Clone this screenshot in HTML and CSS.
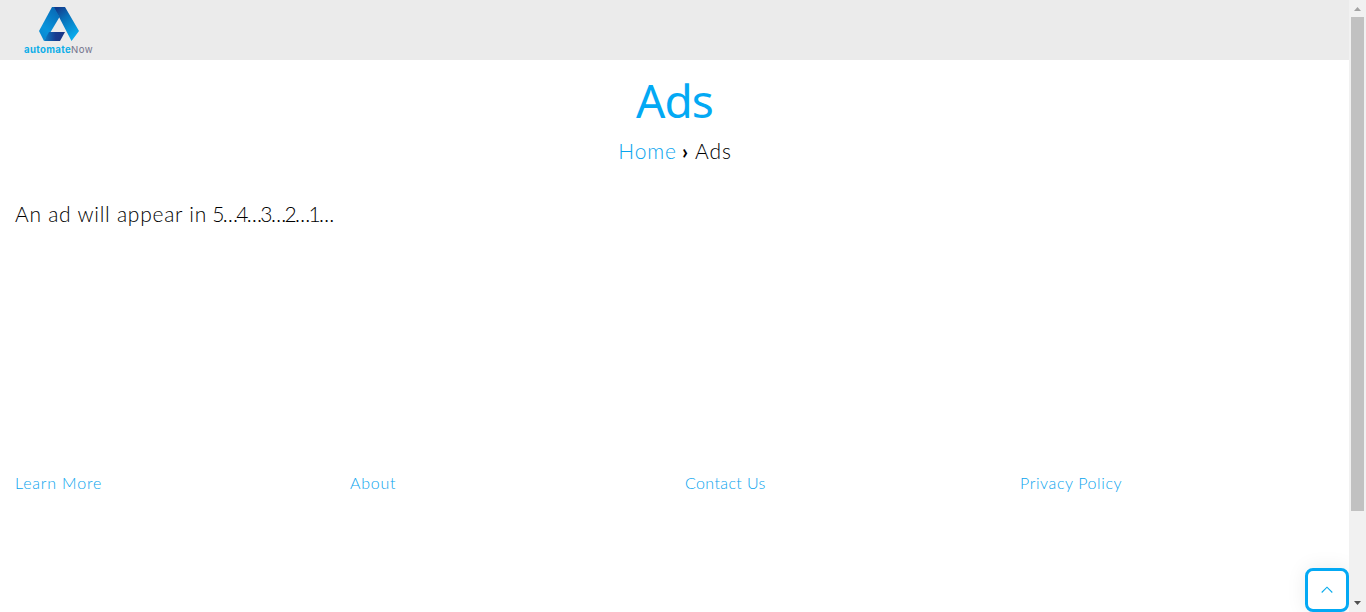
FILE: index.html
```html
<!DOCTYPE html>
<html lang="en">
<head>
<meta charset="utf-8">
<title>Ads</title>
<link rel="stylesheet" href="styles.css">
</head>
<body>
<div class="page">
  <header class="site-header">
    <a class="logo" href="#" aria-label="automateNow">
      <svg width="72" height="50" viewBox="0 0 72 50">
        <defs>
          <linearGradient id="left" x1="0.8" y1="0" x2="0.3" y2="1">
            <stop offset="0" stop-color="#0868b4"/><stop offset="0.7" stop-color="#0894dc"/><stop offset="1" stop-color="#0888d0"/>
          </linearGradient>
          <linearGradient id="right" x1="0.2" y1="0" x2="0.8" y2="1">
            <stop offset="0" stop-color="#123a8c"/><stop offset="0.35" stop-color="#0870b8"/><stop offset="1" stop-color="#08b4f4"/>
          </linearGradient>
          <linearGradient id="base" x1="0" y1="0" x2="1" y2="0">
            <stop offset="0" stop-color="#0880c8"/><stop offset="0.55" stop-color="#183c90"/><stop offset="1" stop-color="#183484"/>
          </linearGradient>
        </defs>
        <path fill="url(#right)" d="M30 2h12l14 24-7.5 10L36 12Z"/>
        <path fill="url(#left)" d="M29 2h2l5.5 10L27 28l-6 8L16 26Z"/>
        <path fill="url(#base)" d="M26 27h16l-5 9H21Z"/>
      </svg>
      <span class="logo-name"><b>automate</b>Now</span>
    </a>
  </header>
  <main class="content">
    <h1 class="title">Ads</h1>
    <nav class="crumbs"><a class="home" href="#">Home</a><span class="sep">›</span><span class="current">Ads</span></nav>
    <p class="notice"><span class="words">An ad will appear in</span> <span class="count">5…4…3…2…1…</span></p>
  </main>
  <footer class="links">
    <a class="learn" href="#">Learn More</a><a class="about" href="#">About</a><a class="contact" href="#">Contact Us</a><a class="privacy" href="#">Privacy Policy</a>
  </footer>
  <a class="to-top" href="#" aria-label="Back to top">
    <svg width="14" height="10" viewBox="0 0 14 10"><path d="M1.7 7.5 7 2.2l5.3 5.3" fill="none" stroke="#09aced" stroke-width="1.1"/></svg>
  </a>
</div>
<div class="scrollbar">
  <svg width="17" height="17" viewBox="0 0 17 17"><path fill="#a3a3a3" d="M5 11h7L8.5 7Z"/></svg>
  <div class="thumb"></div>
  <svg class="down" width="17" height="17" viewBox="0 0 17 17"><path fill="#505050" d="M5 6h7L8.5 10Z"/></svg>
</div>
</body>
</html>
```
FILE: styles.css
```css
* { box-sizing: border-box; }
body { margin: 0; display: flex; height: 612px; overflow: hidden; background: #fff; color: #000; font-family: Lato, "Liberation Sans", sans-serif; font-weight: 300; }
a { color: #09a4ee; text-decoration: none; }
.page { width: 1349px; height: 612px; display: flex; flex-direction: column; position: relative; overflow: hidden; }
.site-header { height: 60px; background: #ebebeb; padding: 5px 23px; }
.logo { display: flex; position: relative; width: 72px; height: 50px; }
.logo-name { position: absolute; left: 1px; top: 38px; font: 400 9.6px/13px Inter, sans-serif; letter-spacing: .4px; color: #73738c; white-space: nowrap; }
.logo-name b { color: #0eaee8; font-weight: 700; letter-spacing: .35px; }
.content { height: 404px; padding: 0 15px; }
.title { margin: 12px 0 0; text-align: center; font: 400 46px/56px "Noto Sans", sans-serif; letter-spacing: -.9px; color: #03a9f4; }
.crumbs { display: flex; justify-content: center; margin-top: 8px; padding-left: 1px; font-size: 21px; line-height: 30px; }
.home { letter-spacing: .9px; }
.sep { font-weight: 700; margin: 0 7px 0 5px; }
.current { letter-spacing: .9px; }
.notice { margin: 33px 0 0; font-size: 21px; line-height: 30px; white-space: nowrap; }
.words { letter-spacing: .75px; }
.count { letter-spacing: -1.65px; }
.count { margin-left: -.5px; }
.links { display: grid; grid-template-columns: repeat(4, 335px); padding: 6px 15px 0; font-size: 16px; line-height: 25px; }
.learn { letter-spacing: .82px; }
.about { letter-spacing: .75px; }
.contact { letter-spacing: .38px; }
.privacy { letter-spacing: .6px; }
.to-top { position: absolute; left: 1305px; top: 568px; width: 44px; height: 44px; border: 3px solid #03a9f4; border-radius: 8px; background: #fff; box-shadow: 0 0 20px rgba(0, 0, 0, .08); display: flex; align-items: center; justify-content: center; }
.scrollbar { width: 17px; height: 612px; background: #f1f1f1; display: flex; flex-direction: column; }
.scrollbar svg { display: block; }
.thumb { width: 13px; height: 494px; margin-left: 2px; background: #c1c1c1; }
.down { margin-top: auto; }
```
